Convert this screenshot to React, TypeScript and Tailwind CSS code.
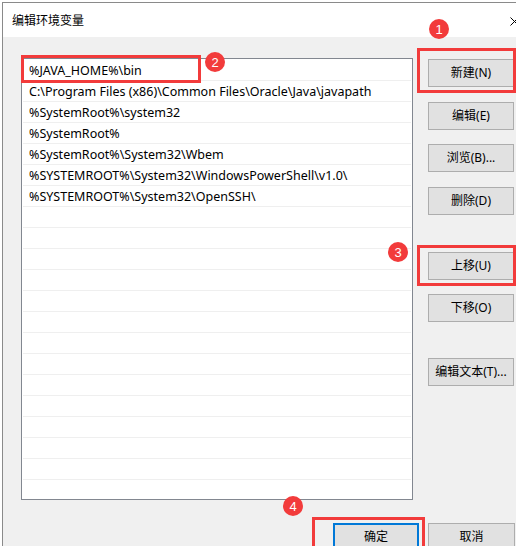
import React from "react";

const paths = [
  "%JAVA_HOME%\\bin",
  "C:\\Program Files (x86)\\Common Files\\Oracle\\Java\\javapath",
  "%SystemRoot%\\system32",
  "%SystemRoot%",
  "%SystemRoot%\\System32\\Wbem",
  "%SYSTEMROOT%\\System32\\WindowsPowerShell\\v1.0\\",
  "%SYSTEMROOT%\\System32\\OpenSSH\\",
];

const rows = [...paths, ...Array.from({ length: 15 }, () => "")];

function Btn({ label, className = "" }: { label: string; className?: string }) {
  return (
    <div
      className={
        "w-[86px] h-[28px] bg-[#e1e1e1] border border-[#adadad] flex items-center justify-center text-[12px] text-black " +
        className
      }
    >
      {label}
    </div>
  );
}

function Badge({ n, className }: { n: number; className: string }) {
  return (
    <div
      className={
        "absolute w-[20px] h-[20px] rounded-full bg-[#f23b3b] text-white text-[13px] leading-none flex items-center justify-center font-['Liberation_Sans',sans-serif] " +
        className
      }
    >
      {n}
    </div>
  );
}

export default function App() {
  return (
    <div className="relative w-[516px] h-[546px] bg-white overflow-hidden font-['Noto_Sans','Noto_Sans_CJK_SC',sans-serif]">
      <div className="ml-[2px] mt-[2px] w-[514px] h-[544px] border-l border-t border-[#8a8a8a] flex flex-col overflow-hidden">
        {/* title bar */}
        <div className="h-[34px] shrink-0 bg-white flex items-center">
          <span className="pl-[9px] pt-[1px] text-[12px] text-black">编辑环境变量</span>
          <svg className="ml-auto mr-[-3px] mt-[2px]" width="9" height="9" viewBox="0 0 9 9">
            <path d="M0.5 0.5 L8.5 8.5 M8.5 0.5 L0.5 8.5" stroke="#000" strokeWidth="1" />
          </svg>
        </div>

        {/* dialog body */}
        <div className="flex-1 bg-[#f0f0f0] flex flex-col">
          <div className="flex pl-[18px] pt-[21px]">
            <div className="w-[392px] h-[442px] border border-[#828790] bg-white overflow-hidden pt-[1px]">
              {rows.map((p, i) => (
                <div
                  key={i}
                  className="mx-[1px] h-[21px] border-b border-[#efefef] flex items-center pl-[6px] pt-[2px] text-[12.5px] text-black whitespace-nowrap"
                >
                  {p}
                </div>
              ))}
            </div>
            <div className="ml-[15px] pt-[1px] flex flex-col">
              <Btn label="新建(N)" />
              <Btn label="编辑(E)" className="mt-[15px]" />
              <Btn label="浏览(B)..." className="mt-[14px]" />
              <Btn label="删除(D)" className="mt-[15px]" />
              <Btn label="上移(U)" className="mt-[37px]" />
              <Btn label="下移(O)" className="mt-[14px]" />
              <Btn label="编辑文本(T)..." className="mt-[36px]" />
            </div>
          </div>
          <div className="flex mt-[23px] ml-[330px] gap-[9px]">
            <div className="w-[86px] h-[28px] bg-[#e1e1e1] border-2 border-[#0078d7] flex items-center justify-center text-[12px] text-black">
              确定
            </div>
            <Btn label="取消" className="w-[87px]" />
          </div>
        </div>
      </div>

      {/* annotation overlays */}
      <div className="absolute left-[21px] top-[55px] w-[180px] h-[28px] border-[3px] border-[#f23b3b]" />
      <div className="absolute left-[417px] top-[48px] w-[99px] h-[45px] border-[3px] border-[#f23b3b]" />
      <div className="absolute left-[417px] top-[245px] w-[99px] h-[41px] border-[3px] border-[#f23b3b]" />
      <div className="absolute left-[312px] top-[517px] w-[113px] h-[40px] border-[3px] border-[#f23b3b]" />
      <Badge n={1} className="left-[429px] top-[19px]" />
      <Badge n={2} className="left-[205px] top-[52px]" />
      <Badge n={3} className="left-[388px] top-[242px]" />
      <Badge n={4} className="left-[283px] top-[496px]" />
    </div>
  );
}
